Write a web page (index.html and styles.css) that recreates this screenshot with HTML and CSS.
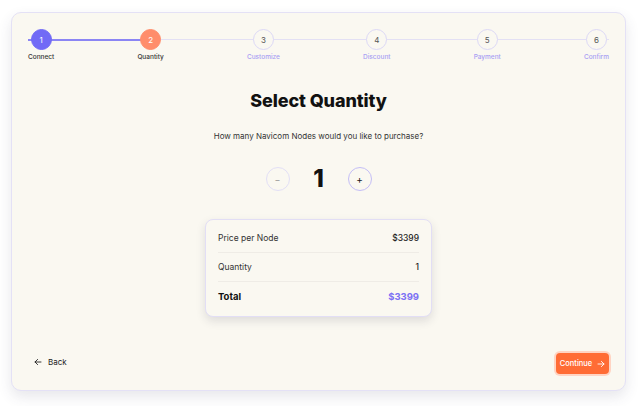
FILE: index.html
```html
<!DOCTYPE html>
<html>
<head>
<meta charset="utf-8">
<link rel="stylesheet" href="styles.css">
</head>
<body>
<div class="card">
  <div class="steps">
    <div class="track"><div class="progress"></div></div>
    <div class="step done"><div class="dot">1</div><div class="label">Connect</div></div>
    <div class="step current"><div class="dot">2</div><div class="label">Quantity</div></div>
    <div class="step"><div class="dot">3</div><div class="label">Customize</div></div>
    <div class="step"><div class="dot">4</div><div class="label">Discount</div></div>
    <div class="step"><div class="dot">5</div><div class="label">Payment</div></div>
    <div class="step"><div class="dot">6</div><div class="label">Confirm</div></div>
  </div>

  <h1 class="title">Select Quantity</h1>
  <p class="subtitle">How many Navicom Nodes would you like to purchase?</p>

  <div class="qty">
    <button class="qbtn minus">&minus;</button>
    <div class="qval">1</div>
    <button class="qbtn plus">+</button>
  </div>

  <div class="summary">
    <div class="row"><span>Price per Node</span><span class="val">$3399</span></div>
    <div class="row"><span>Quantity</span><span class="val">1</span></div>
    <div class="row total"><span>Total</span><span class="val accent">$3399</span></div>
  </div>

  <div class="footer">
    <button class="back">
      <svg width="8" height="8" viewBox="0 0 8 8"><path d="M7 4H1M3.6 1.4L1 4l2.6 2.6" fill="none" stroke="#222" stroke-width="0.9" stroke-linecap="round" stroke-linejoin="round"/></svg>
      <span>Back</span>
    </button>
    <button class="continue">
      <span>Continue</span>
      <svg width="8" height="8" viewBox="0 0 8 8"><path d="M1 4h6M4.4 1.4L7 4 4.4 6.6" fill="none" stroke="#fff" stroke-width="0.9" stroke-linecap="round" stroke-linejoin="round"/></svg>
    </button>
  </div>
</div>
</body>
</html>
```

FILE: styles.css
```css
* { box-sizing: border-box; }
html, body { margin: 0; padding: 0; background: #ffffff; }
body {
  font-family: Inter, "Noto Sans", sans-serif;
  color: #222;
  width: 640px;
  height: 406px;
  overflow: hidden;
}
.card {
  margin: 12px 14px 0 11px;
  height: 379px;
  background: #faf8f1;
  border: 1px solid #e4e1f6;
  border-radius: 10px;
  box-shadow: 0 6px 14px rgba(60, 60, 90, 0.12);
  padding: 16px 16px 16px 16px;
  display: flex;
  flex-direction: column;
  align-items: stretch;
}
.steps {
  position: relative;
  display: flex;
  justify-content: space-between;
  align-items: flex-start;
}
.track {
  position: absolute;
  left: 0;
  right: 0;
  top: 10px;
  height: 1px;
  background: #e3e0f4;
}
.progress {
  position: absolute;
  left: 0;
  top: -0.5px;
  height: 2px;
  width: 122px;
  background: #8b85f4;
}
.step {
  position: relative;
  display: flex;
  flex-direction: column;
  align-items: center;
}
.dot {
  width: 21px;
  height: 21px;
  border-radius: 50%;
  background: #faf8f1;
  border: 1px solid #dcd8f6;
  color: #555;
  font-size: 8px;
  display: flex;
  align-items: center;
  justify-content: center;
}
.step.done .dot { background: #716af6; border-color: #716af6; color: #fff; }
.step.current .dot { background: #ff8d6b; border-color: #ff8d6b; color: #fff; }
.label {
  margin-top: 3px;
  font-size: 6.5px;
  line-height: 9px;
  font-weight: 500;
  color: #a89ff3;
  white-space: nowrap;
}
.step.done .label, .step.current .label { color: #333; }

.title {
  margin: 28px 0 0;
  text-align: center;
  font-size: 18px;
  line-height: 22px;
  font-weight: 800;
  color: #111;
  letter-spacing: -0.1px;
}
.subtitle {
  margin: 18px 0 0;
  text-align: center;
  font-size: 8px;
  line-height: 12px;
  color: #333;
}
.qty {
  margin-top: 25px;
  display: flex;
  justify-content: center;
  align-items: center;
  gap: 21px;
}
.qbtn {
  width: 24px;
  height: 24px;
  border-radius: 50%;
  background: #faf8f1;
  border: 1px solid #e2dff6;
  font-family: Inter, sans-serif;
  font-size: 9px;
  color: #999;
  padding: 0;
  display: flex;
  align-items: center;
  justify-content: center;
}
.qbtn.plus { border-color: #c4bef6; color: #222; font-size: 10px; }
.qval {
  font-size: 24px;
  line-height: 24px;
  font-weight: 800;
  color: #111;
  width: 16px;
  text-align: center;
}
.summary {
  margin: 28px auto 0;
  width: 227px;
  background: #faf8f1;
  border: 1px solid #e2def5;
  border-radius: 8px;
  box-shadow: 0 4px 10px rgba(40, 40, 70, 0.13);
  padding: 4px 12px 5px;
}
.row {
  display: flex;
  justify-content: space-between;
  align-items: center;
  height: 29px;
  font-size: 8.5px;
  color: #333;
  border-bottom: 1px solid #efece6;
}
.row .val { color: #222; font-weight: 500; }
.row.total { border-bottom: none; font-weight: 700; font-size: 9.5px; color: #111; }
.row.total .val { font-weight: 700; }
.accent { color: #7c71f4 !important; }

.footer {
  margin-top: auto;
  display: flex;
  justify-content: space-between;
  align-items: center;
}
.back {
  background: none;
  border: none;
  padding: 4px 6px;
  margin-bottom: 3px;
  display: flex;
  align-items: center;
  gap: 6px;
  font-family: Inter, sans-serif;
  font-size: 8px;
  color: #222;
}
.continue {
  height: 21px;
  width: 53px;
  background: #ff6c35;
  border: none;
  border-radius: 4px;
  box-shadow: 0 0 0 2px #ffd4c3;
  display: flex;
  align-items: center;
  justify-content: center;
  gap: 5px;
  padding: 0;
  font-family: Inter, sans-serif;
  font-size: 7.5px;
  font-weight: 500;
  color: #fff;
}
```
